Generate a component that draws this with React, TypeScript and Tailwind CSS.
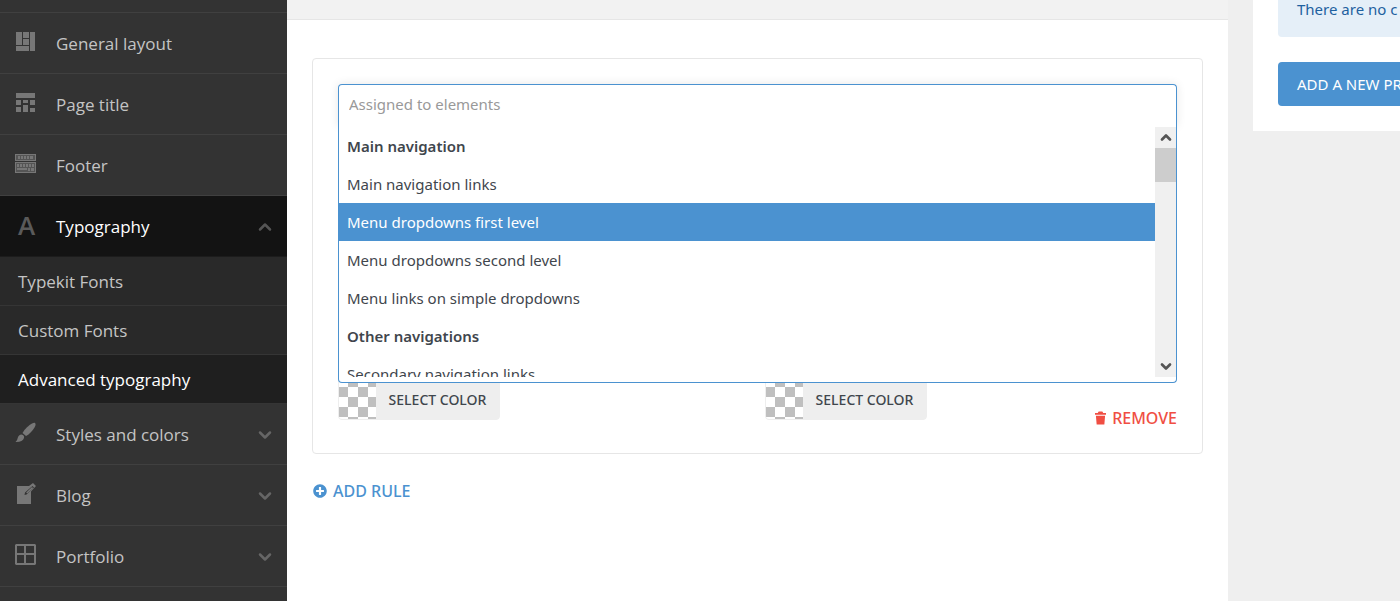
import { useState, type ReactNode } from 'react';
import clsx from 'clsx';
import { ChevronDown, ChevronUp } from 'lucide-react';
import { FaPlusCircle } from 'react-icons/fa';

const iconProps = { width: 22, height: 22, viewBox: '0 0 22 22', fill: 'currentColor', 'aria-hidden': true } as const;

const GeneralIcon = () => (
  <svg {...iconProps}>
    <path d="M2 1h6v13H2zM9 1h6v6H9zM9 8h6v6H9zM2 15h13v5H2zM16 1h5v19h-5z" />
  </svg>
);

const PageTitleIcon = () => (
  <svg {...iconProps}>
    <path d="M2 1h19v5H2zM2 8h5v5H2zM9 8h5v3H9zM16 8h5v5h-5zM2 15h5v5H2zM9 13h5v7H9zM16 16h5v4h-5z" />
  </svg>
);

const FooterIcon = () => (
  <svg {...iconProps}>
    <path fillRule="evenodd" d="M1 1h21v7H1zM2 2v5h19V2zM1 9h21v11H1zM2 10v9h19v-9z" />
    <path d="M4 3h2v3H4zM7 3h2v3H7zM10 3h2v3h-2zM13 3h2v3h-2zM16 3h3v3h-3zM3 11h2v3H3zM6 11h2v3H6zM9 11h2v3H9zM12 11h2v3h-2zM15 11h2v3h-2zM18 11h2v3h-2zM3 15h10v2H3zM14 15h2v3h-2zM17 15h3v3h-3z" />
    <path opacity=".5" d="M2 2h19v5H2zM2 10h19v9H2z" />
  </svg>
);

const BrushIcon = () => (
  <svg {...iconProps}>
    <path d="M21 1c1 1 .7 2.500-.5 4.500-2 3.300-5 6.800-8.500 8.500L8.500 11C11 6.500 15 3 18 1.500 19.300.9 20.400.5 21 1z" />
    <path d="M7.500 12.500c2.200.2 3 1.700 2.500 3.500-.8 3-4 4.200-8.500 4 1.500-1.200 1.600-2.300 2.200-4 .7-2.200 1.800-3.500 3.800-3.500z" />
  </svg>
);

const BlogIcon = () => (
  <svg {...iconProps}>
    <path fillRule="evenodd" d="M3 3h12l4-3 3 3-5 5.500V21H3zM18.500 3 11 9.500l-.5 2.500 2-.5L20 4.500z" />
    <path d="m18 4 1.200 1.200-6 5.400-1-1z" />
  </svg>
);

const PortfolioIcon = () => (
  <svg {...iconProps}>
    <path fillRule="evenodd" d="M2 0h19l1 1v19l-1 1H2l-1-1V1zM3 2v7h7V2zM12 2v7h8V2zM3 11v8h7v-8zM12 11v8h8v-8z" />
  </svg>
);

const TrashIcon = () => (
  <svg width="11" height="14" viewBox="0 0 12 14" fill="currentColor" aria-hidden="true">
    <path d="M4 0h4l1 1.500h3V3.500H0v-2h3zM1 4.500h10L10.200 14H1.800z" />
  </svg>
);

interface MenuItem {
  label: string;
  icon: ReactNode;
  expandable?: boolean;
  children?: string[];
}

const menu: MenuItem[] = [
  { label: 'General layout', icon: <GeneralIcon /> },
  { label: 'Page title', icon: <PageTitleIcon /> },
  { label: 'Footer', icon: <FooterIcon /> },
  {
    label: 'Typography',
    icon: <span aria-hidden="true" className="block pl-1 text-[26px] leading-6 font-semibold">A</span>,
    expandable: true,
    children: ['Typekit Fonts', 'Custom Fonts', 'Advanced typography'],
  },
  { label: 'Styles and colors', icon: <BrushIcon />, expandable: true },
  { label: 'Blog', icon: <BlogIcon />, expandable: true },
  { label: 'Portfolio', icon: <PortfolioIcon />, expandable: true },
];

const options = [
  { label: 'Main navigation', group: true },
  { label: 'Main navigation links' },
  { label: 'Menu dropdowns first level' },
  { label: 'Menu dropdowns second level' },
  { label: 'Menu links on simple dropdowns' },
  { label: 'Other navigations', group: true },
  { label: 'Secondary navigation links' },
];

function Sidebar() {
  return (
    <nav className="w-[287px] shrink-0 bg-[#333] font-['Open_Sans','Noto_Sans',sans-serif] text-[17px] text-[#c4c4c4]">
      <div className="h-[13px] border-b border-[#404040]" />
      {menu.map((item) => (
        <div key={item.label}>
          <a
            href="#"
            className={clsx(
              'flex h-[61px] items-center border-b pt-0.5 pr-3.5 pl-3.5',
              item.children ? 'border-[#1c1c1c] bg-[#131313] text-white' : 'border-[#404040]',
            )}
          >
            <span className={clsx('w-[42px] pb-1', item.children ? 'text-[#5a5a5a]' : 'text-[#777]')}>{item.icon}</span>
            <span className="flex-1">{item.label}</span>
            {item.expandable &&
              (item.children ? (
                <ChevronUp className="h-4 w-4 scale-125 text-[#555]" strokeWidth={3} />
              ) : (
                <ChevronDown className="h-4 w-4 scale-125 text-[#666]" strokeWidth={3} />
              ))}
          </a>
          {item.children?.map((child) => (
            <a
              key={child}
              href="#"
              className={clsx(
                'flex h-[49px] items-center border-b border-[#353535] px-[18px] pt-0.5',
                child === 'Advanced typography' ? 'bg-[#1f1f1f] text-white' : 'bg-[#292929]',
              )}
            >
              {child}
            </a>
          ))}
        </div>
      ))}
    </nav>
  );
}

function ElementPicker() {
  const [active, setActive] = useState('Menu dropdowns first level');

  return (
    <div className="relative">
      <input
        type="text"
        aria-label="Assigned to elements"
        placeholder="Assigned to elements"
        className="block h-[42px] w-full rounded-t border border-b-0 border-[#4b92d0] px-2.5 pb-1 text-[15px] shadow-[0_0_10px_rgba(0,0,0,0.1)] outline-none placeholder:text-[#999]"
      />
      <div className="absolute inset-x-0 top-full flex h-[257px] rounded-b border border-t-0 border-[#4b92d0] bg-white pt-px pb-[5px]">
        <ul role="listbox" aria-label="Elements" className="flex-1 overflow-hidden text-[15px] text-[#3f464d]">
          {options.map((option) => (
            <li
              key={option.label}
              role="option"
              aria-selected={option.label === active}
              onMouseEnter={() => !option.group && setActive(option.label)}
              className={clsx(
                'flex h-[38px] items-center px-2',
                option.group && 'font-semibold',
                option.label === active && 'bg-[#4b92d0] text-white',
              )}
            >
              {option.label}
            </li>
          ))}
        </ul>
        <div className="flex w-[21px] flex-col items-center bg-[#f0f0f0] text-[#555]">
          <ChevronUp className="h-[21px] w-4" strokeWidth={4} />
          <div className="h-[34px] w-full bg-[#cdcdcd]" />
          <ChevronDown className="mt-auto h-[21px] w-4" strokeWidth={4} />
        </div>
      </div>
    </div>
  );
}

function ColorButton() {
  return (
    <button
      type="button"
      className="flex h-[42px] w-[162px] shrink-0 overflow-hidden rounded border border-[#eee] bg-[#eee] text-sm font-medium text-[#3f464d]"
    >
      <span className="h-full w-[37px] shrink-0 bg-[conic-gradient(#bfbfbf_25%,#fff_0_50%,#bfbfbf_0_75%,#fff_0)] bg-[length:20px_20px] bg-[position:-1px_-2px]" />
      <span className="flex-1 self-center pt-px whitespace-nowrap">SELECT COLOR</span>
    </button>
  );
}

export default function App() {
  return (
    <div className="flex min-h-screen overflow-hidden bg-[#efefef] font-['Noto_Sans','Open_Sans',sans-serif]">
      <Sidebar />

      <main className="min-w-0 flex-1 bg-white">
        <div className="h-5 border-b border-[#e6e6e6] bg-[#f2f2f2]" />
        <div className="px-[25px] pt-[38px]">
          <section className="rounded border border-[#e6e6e6] p-[25px]">
            <div className="min-h-[294px]">
              <ElementPicker />
            </div>
            <div className="grid grid-cols-2 gap-[15px]">
              <ColorButton />
              <div className="flex justify-between">
                <ColorButton />
                <button
                  type="button"
                  className="mt-[30px] flex items-center gap-1.5 text-base leading-5 font-medium text-[#f04e43]"
                >
                  <TrashIcon />
                  REMOVE
                </button>
              </div>
            </div>
          </section>
          <button
            type="button"
            className="mt-[27px] flex items-center gap-1.5 pl-px text-base leading-5 font-medium text-[#4b92d0]"
          >
            <FaPlusCircle className="h-3.5 w-3.5" />
            ADD RULE
          </button>
        </div>
      </main>

      <aside className="w-[172px] shrink-0 pl-[25px]">
        <div className="bg-white pb-[25px] pl-[25px] text-[15px] whitespace-nowrap">
          <p className="h-[37px] rounded-bl bg-[#e5eff8] pl-[19px] leading-[18px] text-[#1e61a0]">There are no c</p>
          <button
            type="button"
            className="mt-[25px] h-11 w-full rounded-l bg-[#4b92d0] pl-[19px] text-left text-[15px] text-white"
          >
            ADD A NEW PR
          </button>
        </div>
      </aside>
    </div>
  );
}
